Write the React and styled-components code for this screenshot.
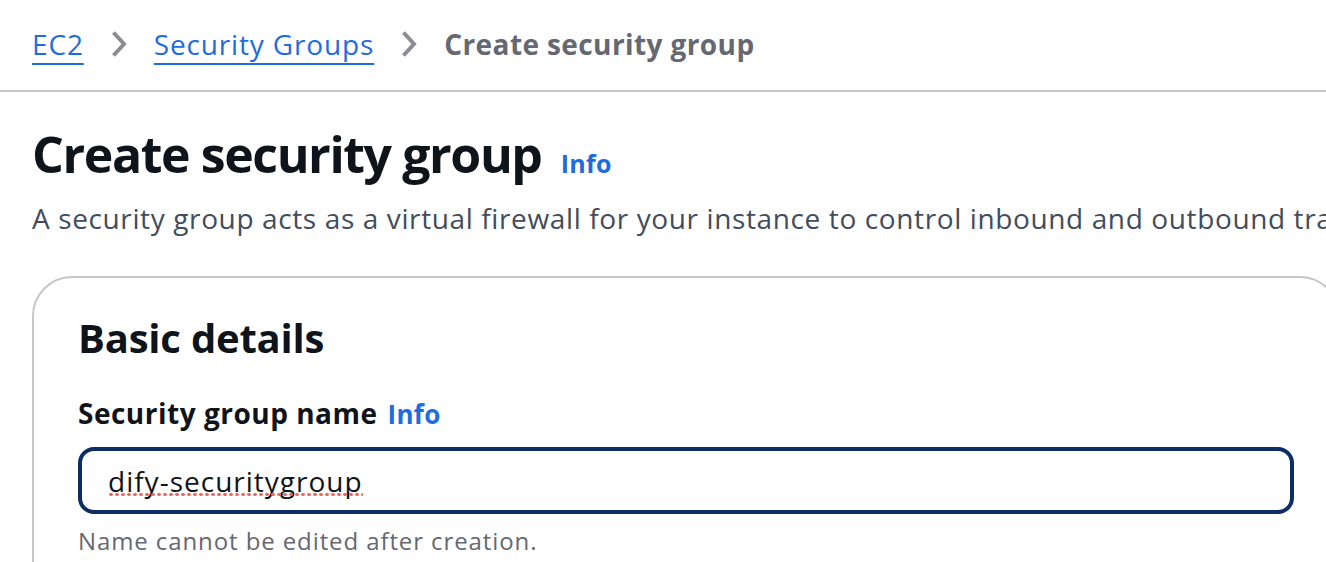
import React from 'react';
import styled, { createGlobalStyle } from 'styled-components';

const Link = '#1f6be0';
const Ink = '#0f141a';
const Muted = '#656871';

const GlobalStyle = createGlobalStyle`
  html, body {
    margin: 0;
    padding: 0;
    background: #fff;
    overflow: hidden;
  }
  body {
    font-family: "Open Sans", "Noto Sans", Arial, sans-serif;
    color: ${Ink};
  }
`;

const Page = styled.div`
  width: 1326px;
  height: 562px;
  overflow: hidden;
`;

const Crumbs = styled.nav`
  display: flex;
  align-items: center;
  gap: 27px;
  height: 92px;
  padding: 0 32px 2px;
  border-bottom: 2px solid #c6c6cd;
  box-sizing: border-box;
  font-size: 28px;
`;

const CrumbLink = styled.a`
  color: ${Link};
  text-decoration: underline;
  text-underline-offset: 8px;
  text-decoration-thickness: 2px;
  letter-spacing: 0.85px;
`;

const CrumbCurrent = styled.span`
  color: ${Muted};
  font-weight: 700;
  letter-spacing: 0.4px;
`;

const Chevron = () => (
  <svg width="16" height="28" viewBox="0 0 16 28" fill="none">
    <path d="M2.5 2.5 L13 14 L2.5 25.5" stroke="#8c8c94" strokeWidth="4" strokeLinejoin="miter" />
  </svg>
);

const Main = styled.main`
  padding: 30px 0 0 32px;
  width: 1340px;
`;

const HeadRow = styled.div`
  display: flex;
  align-items: baseline;
  gap: 19px;
`;

const Title = styled.h1`
  margin: 0;
  font-size: 50px;
  line-height: 64px;
  font-weight: 700;
  letter-spacing: -1.4px;
  color: ${Ink};
`;

const InfoLink = styled.a`
  color: ${Link};
  font-weight: 700;
  font-size: ${p => p.$size || 25}px;
  letter-spacing: 0.3px;
  text-decoration: none;
`;

/* the line runs past the right edge, as in the console at this zoom */
const Description = styled.p`
  margin: 12px 0 0;
  font-size: 28px;
  line-height: 40px;
  color: #414d5c;
  white-space: nowrap;
  letter-spacing: 0.62px;
`;

const Card = styled.section`
  margin-top: 38px;
  border: 2px solid #c6c6cd;
  border-radius: 40px;
  padding: 34px 44px 40px;
  width: 1308px;
  box-sizing: border-box;
`;

const CardTitle = styled.h2`
  margin: 0;
  font-size: 40px;
  line-height: 52px;
  font-weight: 700;
  letter-spacing: -0.2px;
`;

const Field = styled.div`
  margin-top: 29px;
  display: flex;
  flex-direction: column;
`;

const Label = styled.label`
  font-size: 28px;
  line-height: 40px;
  font-weight: 700;
  letter-spacing: 0.5px;
  display: flex;
  align-items: baseline;
  gap: 10px;
`;

const InputWrap = styled.div`
  position: relative;
  margin-top: 13px;
`;

const Input = styled.input`
  display: block;
  width: 100%;
  height: 67px;
  box-sizing: border-box;
  border: 4px solid #0d2d64;
  border-radius: 16px;
  padding: 0 26px;
  font-family: inherit;
  font-size: 28px;
  letter-spacing: 1px;
  color: ${Ink};
  outline: none;
  background: #fff;
`;

/* spell-check squiggle drawn over the input text */
const Squiggle = styled.span`
  position: absolute;
  left: 30px;
  top: 0;
  height: 67px;
  display: flex;
  align-items: center;
  font-size: 28px;
  letter-spacing: 1px;
  color: transparent;
  pointer-events: none;
  white-space: pre;
  background-image: radial-gradient(circle, #ef6b5f 1.5px, transparent 2px);
  background-size: 6px 5px;
  background-repeat: repeat-x;
  background-position: 0 45px;
`;

const Hint = styled.div`
  margin-top: 10px;
  font-size: 24px;
  line-height: 34px;
  letter-spacing: 0.9px;
  color: ${Muted};
`;

export default function App() {
  const name = 'dify-securitygroup';
  return (
    <Page>
      <GlobalStyle />
      <Crumbs>
        <CrumbLink href="#">EC2</CrumbLink>
        <Chevron />
        <CrumbLink href="#">Security Groups</CrumbLink>
        <Chevron />
        <CrumbCurrent>Create security group</CrumbCurrent>
      </Crumbs>
      <Main>
        <HeadRow>
          <Title>Create security group</Title>
          <InfoLink href="#">Info</InfoLink>
        </HeadRow>
        <Description>
          A security group acts as a virtual firewall for your instance to control inbound and outbound traffic.
        </Description>
        <Card>
          <CardTitle>Basic details</CardTitle>
          <Field>
            <Label>
              Security group name <InfoLink href="#" $size={26}>Info</InfoLink>
            </Label>
            <InputWrap>
              <Input defaultValue={name} spellCheck={false} />
              <Squiggle aria-hidden="true">{name}</Squiggle>
            </InputWrap>
            <Hint>Name cannot be edited after creation.</Hint>
          </Field>
        </Card>
      </Main>
    </Page>
  );
}
